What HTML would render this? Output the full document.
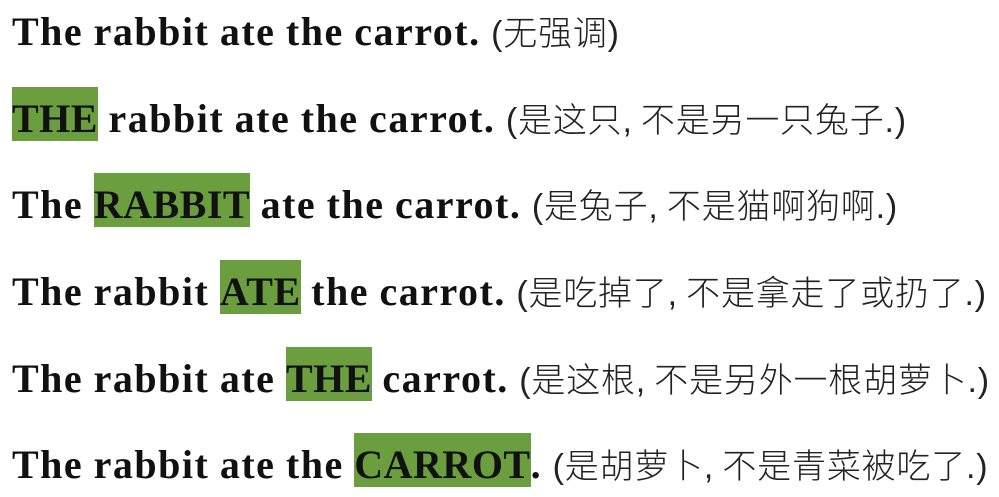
<!DOCTYPE html>
<html><head><meta charset="utf-8"><style>
html,body{margin:0;padding:0;background:#fff;width:999px;height:495px;overflow:hidden;}
.l{position:absolute;left:12px;height:60px;line-height:60px;white-space:nowrap;font-family:"Liberation Serif",serif;font-weight:bold;font-size:40px;color:#111;letter-spacing:1.5px;word-spacing:-1px;}
.c{font-family:"Liberation Sans","Noto Sans CJK SC",sans-serif;font-weight:300;font-size:34px;color:#222;letter-spacing:0.8px;word-spacing:-2px;}
.h{background:#6a9e3f;padding-top:9px;padding-bottom:0;letter-spacing:0.5px;}
</style></head><body>
<div class="l" style="top:2px">The rabbit ate the carrot. <span class="c">(无强调)</span></div>
<div class="l" style="top:89px"><span class="h">THE</span> rabbit ate the carrot. <span class="c">(是这只, 不是另一只兔子.)</span></div>
<div class="l" style="top:175px">The <span class="h">RABBIT</span> ate the carrot. <span class="c">(是兔子, 不是猫啊狗啊.)</span></div>
<div class="l" style="top:262px">The rabbit <span class="h">ATE</span> the carrot. <span class="c">(是吃掉了, 不是拿走了或扔了.)</span></div>
<div class="l" style="top:349px">The rabbit ate <span class="h">THE</span> carrot. <span class="c">(是这根, 不是另外一根胡萝卜.)</span></div>
<div class="l" style="top:435px">The rabbit ate the <span class="h">CARROT</span>. <span class="c">(是胡萝卜, 不是青菜被吃了.)</span></div>
</body></html>
